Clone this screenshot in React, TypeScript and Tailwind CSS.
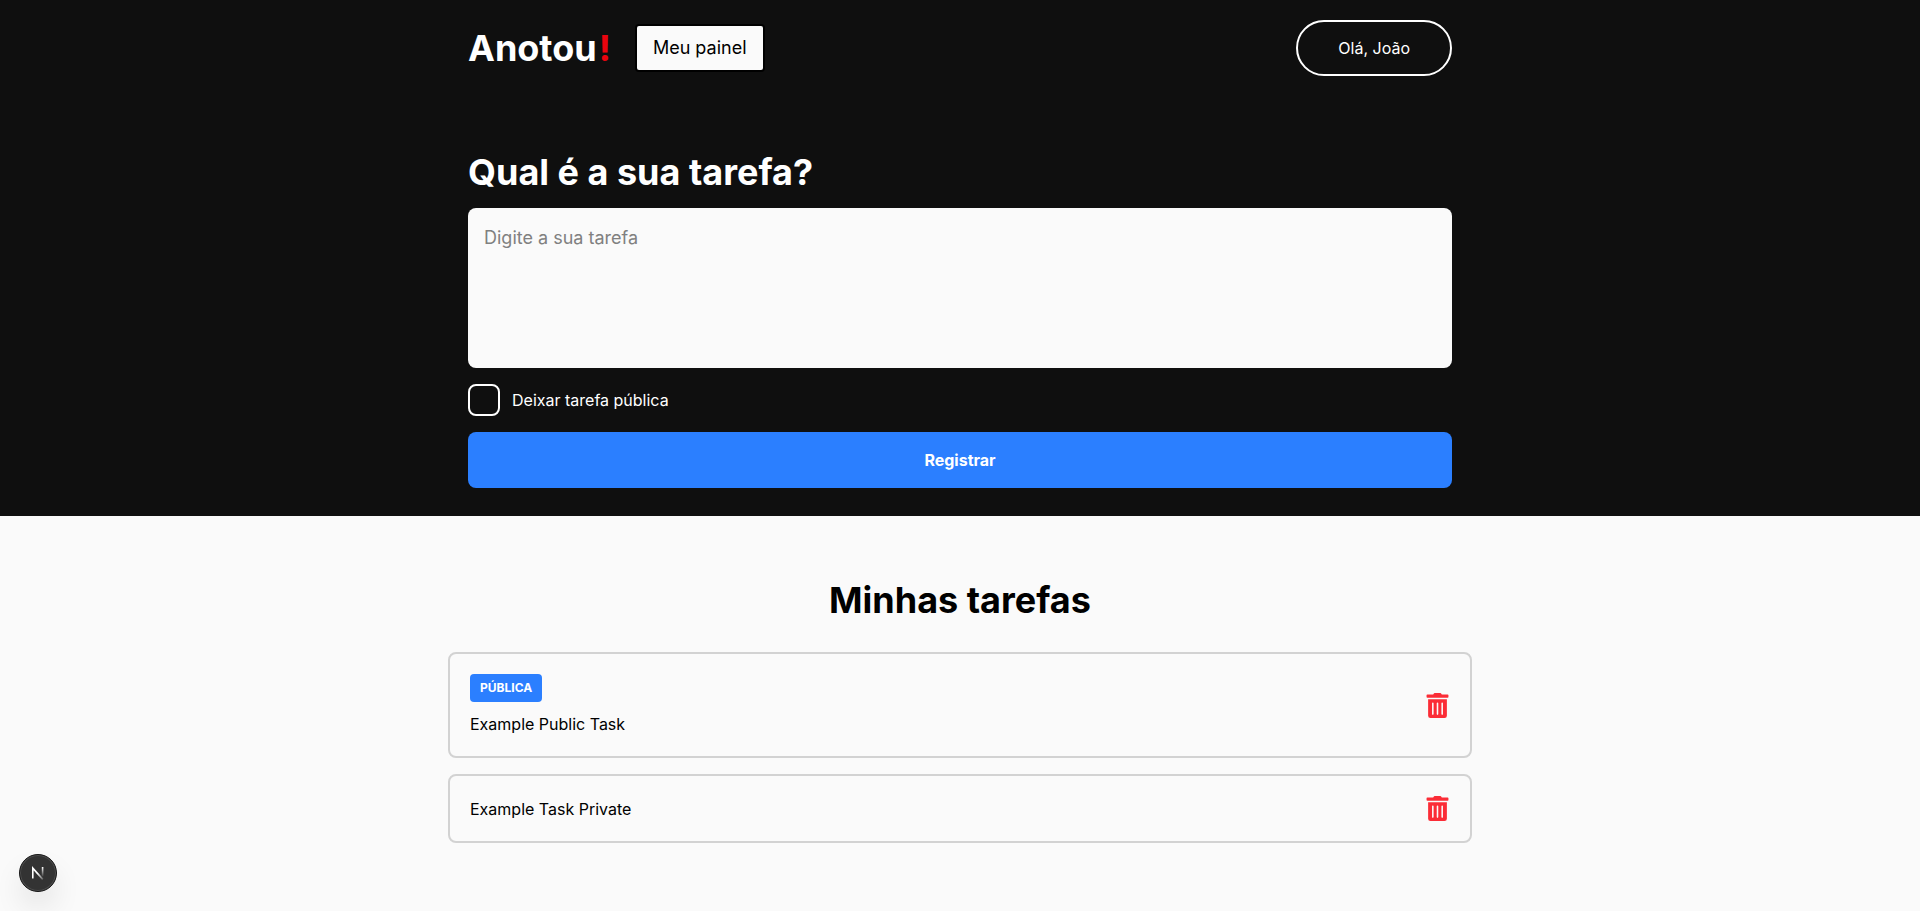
import { useState } from "react";
import { FaTrashAlt } from "react-icons/fa";

type Task = { id: number; text: string; isPublic: boolean };

const initialTasks: Task[] = [
  { id: 1, text: "Example Public Task", isPublic: true },
  { id: 2, text: "Example Task Private", isPublic: false },
];

function Header() {
  return (
    <header className="w-full bg-[#0f0f0f]">
      <div className="mx-auto flex w-full max-w-5xl items-center justify-between px-5 py-5">
        <nav className="flex items-center gap-6">
          <a href="#" className="text-4xl font-bold text-white">
            Anotou<span className="pl-0.5 text-[#ea040e]">!</span>
          </a>
          <a
            href="#painel"
            className="rounded-sm border-2 border-black bg-[#fafafa] px-4 py-2 text-lg text-black"
          >
            Meu painel
          </a>
        </nav>
        <button type="button" className="rounded-full border-2 border-white px-10 py-3.5 text-base text-white">
          Olá, João
        </button>
      </div>
    </header>
  );
}

function TaskItem({ task, onRemove }: { task: Task; onRemove: () => void }) {
  return (
    <li className="flex items-center justify-between gap-4 rounded-lg border-2 border-[#d2d2d2] p-5">
      <div className="flex flex-col items-start gap-2.5">
        {task.isPublic && (
          <span className="rounded bg-[#2b7fff] px-2.5 py-1.5 text-xs font-bold text-white">PÚBLICA</span>
        )}
        <p>{task.text}</p>
      </div>
      <button type="button" aria-label="Excluir tarefa" className="text-[#fb2c36]" onClick={onRemove}>
        <FaTrashAlt size={25} />
      </button>
    </li>
  );
}

export default function App() {
  const [tasks, setTasks] = useState(initialTasks);
  const [text, setText] = useState("");
  const [isPublic, setIsPublic] = useState(false);

  const register = () => {
    if (!text.trim()) return;
    setTasks([...tasks, { id: Date.now(), text, isPublic }]);
    setText("");
    setIsPublic(false);
  };

  return (
    <div className="min-h-screen bg-[#fafafa] font-['Inter',sans-serif] text-black">
      <Header />
      <main>
        <section className="bg-[#0f0f0f] pt-14 pb-7">
          <form
            className="mx-auto flex w-full max-w-5xl flex-col px-5"
            onSubmit={(e) => {
              e.preventDefault();
              register();
            }}
          >
            <h1 className="mb-4 text-4xl font-bold text-white">
              <label htmlFor="task">Qual é a sua tarefa?</label>
            </h1>
            <textarea
              id="task"
              className="h-40 w-full resize-none rounded-lg bg-[#fafafa] p-4 text-lg text-black outline-none placeholder:text-[#808080]"
              placeholder="Digite a sua tarefa"
              value={text}
              onChange={(e) => setText(e.target.value)}
            />
            <div className="my-4 flex items-center gap-3">
              <input
                id="public"
                type="checkbox"
                className="size-8 appearance-none rounded-lg border-2 border-white checked:bg-[#2b7fff]"
                checked={isPublic}
                onChange={(e) => setIsPublic(e.target.checked)}
              />
              <label htmlFor="public" className="text-white">
                Deixar tarefa pública
              </label>
            </div>
            <button type="submit" className="w-full rounded-lg bg-[#2b7fff] py-4 font-bold text-white">
              Registrar
            </button>
          </form>
        </section>
        <section className="mx-auto w-full max-w-5xl pt-16 pb-8">
          <h2 className="mb-8 text-center text-4xl font-bold">Minhas tarefas</h2>
          <ul className="flex flex-col gap-4">
            {tasks.map((task) => (
              <TaskItem
                key={task.id}
                task={task}
                onRemove={() => setTasks(tasks.filter((t) => t.id !== task.id))}
              />
            ))}
          </ul>
        </section>
      </main>
      <button
        type="button"
        aria-label="Next.js"
        className="fixed bottom-[19px] left-[19px] flex size-[38px] items-center justify-center rounded-full border border-[#171717] bg-[#333333] shadow-[0_16px_32px_-8px_rgba(0,0,0,0.24),inset_0_0_0_1px_#4d4d4d]"
      >
        <svg width="14" height="14" viewBox="0 0 14 14" fill="none">
          <defs>
            <linearGradient id="stem" x1="0" y1="1" x2="0" y2="11" gradientUnits="userSpaceOnUse">
              <stop stopColor="#fff" />
              <stop offset="1" stopColor="#fff" stopOpacity="0" />
            </linearGradient>
            <linearGradient id="diagonal" x1="7" y1="7" x2="13" y2="14" gradientUnits="userSpaceOnUse">
              <stop stopColor="#fff" />
              <stop offset="1" stopColor="#fff" stopOpacity="0.1" />
            </linearGradient>
          </defs>
          <path d="M1.8 12.6V2.2L11.8 13.4" stroke="url(#diagonal)" strokeWidth="1.6" />
          <path d="M11.6 1V10.5" stroke="url(#stem)" strokeWidth="1.6" />
        </svg>
      </button>
    </div>
  );
}
